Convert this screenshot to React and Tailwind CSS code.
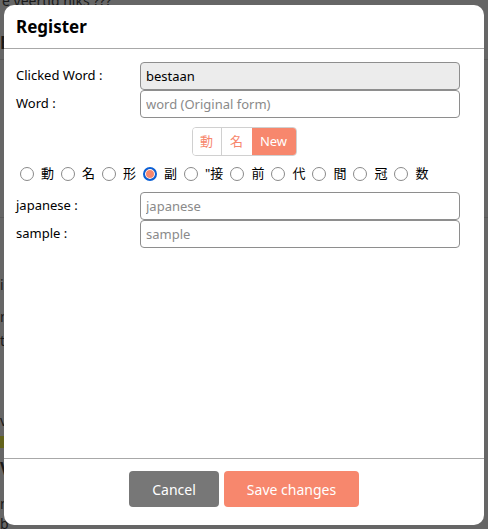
import React, { useState } from "react";

const POS = ["動", "名", "形", "副", "\"接", "前", "代", "間", "冠", "数"];

function Radio({ label, checked, onClick }) {
    return (
        <label onClick={onClick} className="flex items-center gap-[7px] mr-[7px] cursor-pointer">
            {checked ? (
                <span className="w-[14px] h-[14px] rounded-full border-[2px] border-[#0a60d6] bg-[#f7876d] shadow-[inset_0_0_0_1px_white]" />
            ) : (
                <span className="w-[14px] h-[14px] rounded-full border border-[#8a8a8a] bg-white" />
            )}
            <span className="text-[13px] text-black">{label}</span>
        </label>
    );
}

function Field({ label, placeholder, value, disabled }) {
    return (
        <div className="flex items-center">
            <span className="w-[124px] text-[13px] text-black">{label}</span>
            <input
                readOnly
                value={value || ""}
                placeholder={placeholder}
                className={`w-[320px] h-[28px] px-[5px] text-[13px] rounded-[4px] border border-[#8e8e8e] outline-none placeholder:text-[#8a8a8a] ${disabled ? "bg-[#ececec] text-black" : "bg-white"}`}
            />
        </div>
    );
}

export default function App() {
    const [pos, setPos] = useState(3);

    return (
        <div className="relative w-[488px] h-[529px] overflow-hidden bg-[#666666] font-['Noto_Sans','Noto_Sans_CJK_JP',sans-serif]">
            {/* dimmed page behind the modal */}
            <div className="text-[14px] text-[#1a1a1a] leading-none">
                <div className="-mt-[6px] pl-[2px]">e veertig niks ???</div>
                <div className="mt-[26px] text-[17px] font-bold">B</div>
                <div className="mt-[8px] h-px bg-[#5a5a5a]" />
                <div className="mt-[157px] h-px bg-[#5a5a5a]" />
                <div className="mt-[60px]">i</div>
                <div className="mt-[18px]">n</div>
                <div className="mt-[10px]">t</div>
                <div className="mt-[66px]">v</div>
                <div className="mt-[8px] w-[4px] h-[12px] bg-[#63631c]" />
                <div className="mt-[12px] text-[17px] font-bold">V</div>
                <div className="mt-[20px]">n</div>
                <div className="mt-[6px]">b</div>
            </div>

            {/* modal */}
            <div className="absolute left-[4px] top-[5px] w-[480px] h-[520px] bg-white rounded-[10px] flex flex-col">
                <div className="h-[44px] px-[12px] flex items-center border-b border-[#a8a8a8]">
                    <h2 className="text-[17px] font-bold text-black">Register</h2>
                </div>

                <div className="flex-1 px-[12px] pt-[13px]">
                    <Field label="Clicked Word :" value="bestaan" disabled />
                    <Field label="Word :" placeholder="word (Original form)" />

                    <div className="mt-[9px] flex justify-center">
                        <div className="flex h-[29px] text-[13px] rounded-[4px] overflow-hidden border border-[#d0d0d0]">
                            <button className="w-[29px] text-[#f7876d] bg-white border-r border-[#d0d0d0]">動</button>
                            <button className="w-[30px] text-[#f7876d] bg-white">名</button>
                            <button className="w-[44px] text-white bg-[#f7876d] -my-px">New</button>
                        </div>
                    </div>

                    <div className="mt-[11px] pl-[4px] flex items-center h-[14px]">
                        {POS.map((p, i) => (
                            <Radio key={p} label={p} checked={pos === i} onClick={() => setPos(i)} />
                        ))}
                    </div>

                    <div className="mt-[11px]">
                        <Field label="japanese :" placeholder="japanese" />
                        <Field label="sample :" placeholder="sample" />
                    </div>
                </div>

                <div className="h-[67px] border-t border-[#a8a8a8] flex justify-center gap-[5px] pt-[12px]">
                    <button className="w-[90px] h-[36px] rounded-[4px] bg-[#777777] text-white text-[14px]">Cancel</button>
                    <button className="w-[135px] h-[36px] rounded-[4px] bg-[#f7876d] text-white text-[14px]">Save changes</button>
                </div>
            </div>
        </div>
    );
}
